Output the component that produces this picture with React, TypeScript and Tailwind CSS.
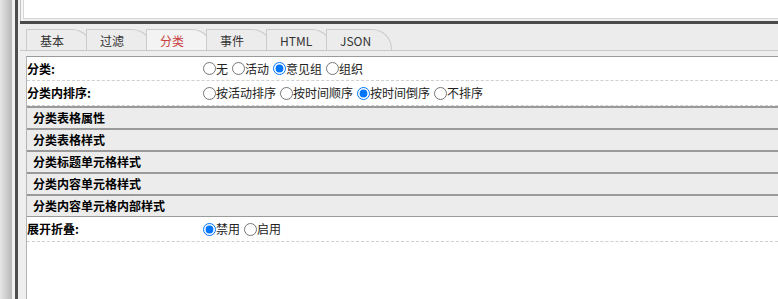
import React from "react";

const font = { fontFamily: '"Noto Sans CJK SC", "Noto Sans", sans-serif' };

interface RadioRow {
  label: string;
  name: string;
  options: string[];
  checked: number;
}

const tabs = ["基本", "过滤", "分类", "事件", "HTML", "JSON"];
const sections = ["分类表格属性", "分类表格样式", "分类标题单元格样式", "分类内容单元格样式", "分类内容单元格内部样式"];

function Radios({ row }: { row: RadioRow }) {
  return (
    <div className="flex items-center text-[12px] text-[#222]">
      {row.options.map((opt, i) => (
        <label key={opt} className={`flex items-center ${i > 0 ? "ml-[4px]" : ""}`}>
          <input
            type="radio"
            name={row.name}
            defaultChecked={i === row.checked}
            className="m-0 h-[13px] w-[13px]"
          />
          <span>{opt}</span>
        </label>
      ))}
    </div>
  );
}

function FieldRow({ row, tall }: { row: RadioRow; tall?: boolean }) {
  return (
    <div
      className={`flex items-center border-b border-dashed border-[#cfcfcf] ${tall ? "h-[25px]" : "h-[24px]"}`}
    >
      <div className="w-[176px] shrink-0 text-[12px] font-bold text-black">{row.label}</div>
      <Radios row={row} />
    </div>
  );
}

export default function App() {
  const category: RadioRow = { label: "分类:", name: "cat", options: ["无", "活动", "意见组", "组织"], checked: 2 };
  const order: RadioRow = {
    label: "分类内排序:",
    name: "order",
    options: ["按活动排序", "按时间顺序", "按时间倒序", "不排序"],
    checked: 2,
  };
  const fold: RadioRow = { label: "展开折叠:", name: "fold", options: ["禁用", "启用"], checked: 0 };

  return (
    <div className="flex h-[299px] w-[778px] overflow-hidden bg-white" style={font}>
      {/* left splitter */}
      <div className="w-[12px] shrink-0 bg-gradient-to-r from-[#e6e6e6] to-[#b8b8b8]" />
      <div className="w-[3px] shrink-0 bg-[#f1f1f1]" />
      <div className="w-[3px] shrink-0 bg-[#4d4d4d]" />

      <div className="flex min-w-0 flex-1 flex-col bg-[#eeeeee]">
        {/* top editor area */}
        <div className="flex h-[21px] shrink-0">
          <div className="w-[2px] bg-[#eeeeee]" />
          <div className="w-[1px] bg-[#c4c4c4]" />
          <div className="w-[2px] bg-[#f6f6f6]" />
          <div className="mb-[2px] flex-1 border-b border-l border-[#d6d6d6] bg-white" />
        </div>

        <div className="flex min-h-0 flex-1">
          <div className="w-[2px] shrink-0 bg-[#eeeeee]" />
          <div className="flex min-w-0 flex-1 flex-col">
            <div className="h-[3px] shrink-0 bg-[#4a4a4a]" />

            {/* tabs */}
            <div className="flex h-[27px] shrink-0 items-end border-b border-[#c8c8c8] bg-[#ececec] pl-[6px]">
              {tabs.map((t) => (
                <div
                  key={t}
                  className={`relative -mr-[6px] flex h-[21px] w-[66px] items-center rounded-tr-[20px] border-l border-r border-t border-[#cbcbcb] pl-[13px] pt-[2px] text-[12px] ${
                    t === "分类" ? "bg-[#f3f3f3] text-[#c8403f]" : "bg-[#ececec] text-[#333]"
                  }`}
                >
                  {t}
                </div>
              ))}
            </div>
            <div className="h-[5px] shrink-0 bg-[#eeeeee]" />

            {/* content */}
            <div className="ml-[6px] flex-1 border-l border-t border-l-[#b4b4b4] border-t-[#9a9a9a] bg-white">
              <FieldRow row={category} />
              <FieldRow row={order} tall />
              {sections.map((s, i) => (
                <div
                  key={s}
                  className={`flex h-[22px] items-center border-t-2 border-[#9a9a9a] bg-[#ececec] pl-[6px] text-[12px] font-bold text-black ${
                    i === sections.length - 1 ? "h-[23px] border-b" : ""
                  }`}
                >
                  {s}
                </div>
              ))}
              <FieldRow row={fold} tall />
            </div>
          </div>
        </div>
      </div>
    </div>
  );
}
